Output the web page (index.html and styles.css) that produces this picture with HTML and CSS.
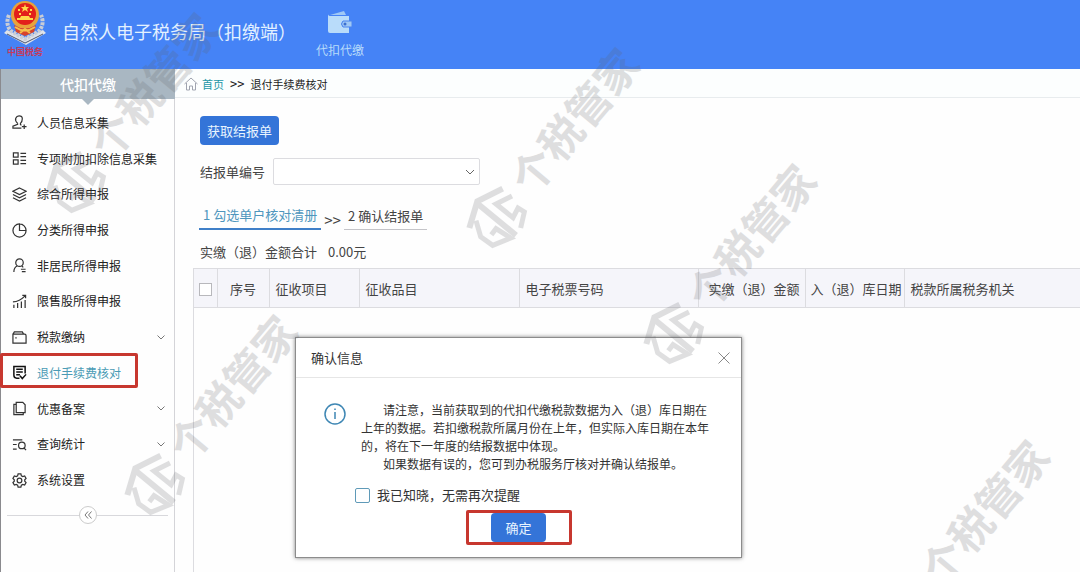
FILE: index.html
```
<!DOCTYPE html>
<html lang="zh-CN">
<head>
    <meta charset="UTF-8">
    <meta name="viewport" content="width=device-width, initial-scale=1.0">
    <title>自然人电子税务局（扣缴端）</title>
    <link rel="stylesheet" href="styles.css">
</head>
<body>

<!-- Header -->
<header class="header">
    <div class="brand">
        <svg class="emblem" viewBox="0 0 42 45">
            <path d="M3 30 L21 38 L39 30 L42 33 L22 45 L0 33 Z" fill="#dfe3ea"/>
            <path d="M5 15 Q1 24 7 31 L21 39 L35 31 Q41 24 37 15" fill="none" stroke="#c9cdd6" stroke-width="4" stroke-dasharray="3 1"/>
            <path d="M3 34 L21 43 L39 34" fill="none" stroke="#4b5570" stroke-width="1"/>
            <circle cx="21" cy="15" r="14" fill="#e8a33b"/>
            <circle cx="21" cy="14" r="11" fill="#e3201b"/>
            <path d="M21 4 l1 3 h3 l-2 2 1 3 -3 -2 -3 2 1 -3 -2 -2 h3z" fill="#ffd94a"/>
            <path d="M14 10h2M26 10h2M15 14h2M25 14h2" stroke="#ffd94a" stroke-width="2"/>
            <path d="M13 20h16v-2h-3l-1-2h-8l-1 2h-3z" fill="#ffd94a"/>
            <path d="M10 25 Q21 32 32 25 L30 32 L21 36 L12 32 Z" fill="#d8422a"/>
            <path d="M11 27 Q21 34 31 27M16 33 L21 29 L26 33" fill="none" stroke="#f3c04d" stroke-width="2"/>
        </svg>
        <span class="emblem-text">中国税务</span>
    </div>
    <h1 class="title">自然人电子税务局（扣缴端）</h1>
    <a class="top-nav" href="#">
        <svg class="wallet" viewBox="0 0 24 24">
            <path d="M2 5 L16 1 L18 5 Z" fill="#9fc8f5"/>
            <path d="M0 4 Q0 6 3 6 H21 V11 H15 Q12 14 15 17 H21 V23 H2 Q0 23 0 21 Z" fill="#b9dcfa"/>
            <path d="M15 11 H24 V17 H15 Q12 14 15 11 Z" fill="#9fc8f5" stroke="#4a84ee" stroke-width="1"/>
            <circle cx="17" cy="14" r="1.5" fill="#3c6fcf"/>
        </svg>
        <span>代扣代缴</span>
    </a>
</header>

<div class="layout">
    <!-- Sidebar -->
    <aside class="sidebar">
        <h2 class="sidebar-title">代扣代缴</h2>
        <nav>
            <ul class="menu">
                <li><a href="#">
                    <svg class="icon" viewBox="0 0 16 16"><path d="M6 9 Q3 6 4 3.500 Q5 1 7.500 1 Q11 1 11 4 Q11 7 9 9 V10 L10 11 M6 9 V10 L1 12 V14 H10 M13 10 V15 M10.500 12.500 H15.500"/></svg>
                    <span>人员信息采集</span></a></li>
                <li><a href="#">
                    <svg class="icon" viewBox="0 0 16 16"><path d="M1.500 2 H6.500 V6.500 H1.500 Z M1.500 9.500 H6.500 V14 H1.500 Z M9 2.500 H15 M9 6 H15 M9 10 H15 M9 13.500 H15"/></svg>
                    <span>专项附加扣除信息采集</span></a></li>
                <li><a href="#">
                    <svg class="icon" viewBox="0 0 16 16"><path d="M8 1 L15 4.500 L8 8 L1 4.500 Z M1 8 L8 11.500 L15 8 M1 11.500 L8 15 L15 11.500"/></svg>
                    <span>综合所得申报</span></a></li>
                <li><a href="#">
                    <svg class="icon" viewBox="0 0 16 16"><path d="M8 1 A7 7 0 1 0 15 8 H8 Z M8 1 A7 7 0 0 1 15 8"/></svg>
                    <span>分类所得申报</span></a></li>
                <li><a href="#">
                    <svg class="icon" viewBox="0 0 16 16"><circle cx="8" cy="5" r="4"/><path d="M5.500 8.500 Q2 10 2 15 M10.500 8.500 L12 10 M9.500 12 H14.500 M10.500 14.500 H14.500"/></svg>
                    <span>非居民所得申报</span></a></li>
                <li><a href="#">
                    <svg class="icon" viewBox="0 0 16 16"><path d="M2 15 V11.500 M6 15 V9.500 M10 15 V8 M14 15 V6.500 M1 8.500 Q8 8 14 2 M11 1.500 H14.500 V4.500"/></svg>
                    <span>限售股所得申报</span></a></li>
                <li><a href="#">
                    <svg class="icon" viewBox="0 0 16 16"><path d="M1 4.500 H13.500 Q15 4.500 15 6 V14 H1 Z M1 4.500 L2.500 2 H11 L12.500 4.500 M3.500 8.500 H5"/></svg>
                    <span>税款缴纳</span>
                    <svg class="arrow" viewBox="0 0 8 5"><path d="M.5 .5 L4 4 L7.500 .5"/></svg></a></li>
                <li class="active"><a href="#">
                    <svg class="icon" viewBox="0 0 16 16"><path d="M14 9 V1.500 H2 V11 Q2 14 5 14 H8 M4.500 4.500 H11.500 M4.500 7.500 H11.500 M4.500 10.500 H8.500 M8.500 11.500 L11 14.500 L15 10"/></svg>
                    <span>退付手续费核对</span></a></li>
                <li><a href="#">
                    <svg class="icon" viewBox="0 0 16 16"><path d="M4.500 1.500 H11.500 L14 4 V12.500 H4.500 Z M4.500 3.500 H2 V14.500 H12 V12.500"/></svg>
                    <span>优惠备案</span>
                    <svg class="arrow" viewBox="0 0 8 5"><path d="M.5 .5 L4 4 L7.500 .5"/></svg></a></li>
                <li><a href="#">
                    <svg class="icon" viewBox="0 0 16 16"><path d="M1 3 H11 M1 8 H5 M1 13 H5 M12.500 11.500 L15 14"/><circle cx="10.500" cy="9" r="3.500"/></svg>
                    <span>查询统计</span>
                    <svg class="arrow" viewBox="0 0 8 5"><path d="M.5 .5 L4 4 L7.500 .5"/></svg></a></li>
                <li><a href="#">
                    <svg class="icon" viewBox="0 0 16 16"><path d="M6.500 1 H9.500 L10 3 L11.500 3.800 L13.500 3.200 L15 5.800 L13.600 7.200 V8.800 L15 10.200 L13.500 12.800 L11.500 12.200 L10 13 L9.500 15 H6.500 L6 13 L4.500 12.200 L2.500 12.800 L1 10.200 L2.400 8.800 V7.200 L1 5.800 L2.500 3.200 L4.500 3.800 L6 3 Z"/><circle cx="8" cy="8" r="2.500"/></svg>
                    <span>系统设置</span></a></li>
            </ul>
        </nav>
        <div class="collapse">
            <button type="button" class="collapse-btn" aria-label="收起菜单">
                <svg viewBox="0 0 8 8"><path d="M4 .5 L1 4 L4 7.500 M7.500 .5 L4.500 4 L7.500 7.500"/></svg>
            </button>
        </div>
    </aside>

    <!-- Content -->
    <main class="main">
        <div class="breadcrumb">
            <svg class="home" viewBox="0 0 14 14"><path d="M.5 7 L7 1 L13.500 7 M2.500 6 V13 H5.500 V9 H8.500 V13 H11.500 V6"/></svg>
            <a href="#">首页</a>
            <span class="sep">&gt;&gt;</span>
            <span>退付手续费核对</span>
        </div>

        <div class="toolbar">
            <button type="button" class="btn">获取结报单</button>
            <div class="field">
                <label for="billNo">结报单编号</label>
                <select id="billNo">
                    <option value=""></option>
                </select>
            </div>
            <div class="steps">
                <a class="step current" href="#">1 勾选单户核对清册</a>
                <span class="sep step-sep">&gt;&gt;</span>
                <a class="step" href="#">2 确认结报单</a>
            </div>
            <div class="total"><span>实缴（退）金额合计</span><span>0.00元</span></div>
        </div>

        <div class="table-wrap">
            <table>
                <thead>
                    <tr>
                        <th class="col-check"><input type="checkbox" aria-label="全选"></th>
                        <th class="col-no">序号</th>
                        <th class="col-item">征收项目</th>
                        <th class="col-sub">征收品目</th>
                        <th class="col-ticket">电子税票号码</th>
                        <th class="col-amount">实缴（退）金额</th>
                        <th class="col-date">入（退）库日期</th>
                        <th>税款所属税务机关</th>
                    </tr>
                </thead>
            </table>
        </div>
    </main>
</div>

<!-- Confirm dialog -->
<div class="dialog" role="dialog" aria-labelledby="dialogTitle">
    <div class="dialog-head">
        <h3 id="dialogTitle">确认信息</h3>
        <button type="button" class="close" aria-label="关闭">
            <svg viewBox="0 0 12 12"><path d="M.5 .5 L11.500 11.500 M11.500 .5 L.5 11.500"/></svg>
        </button>
    </div>
    <div class="dialog-body">
        <svg class="info" viewBox="0 0 22 22"><circle cx="11" cy="11" r="10"/><path d="M11 9 V16 M11 5.500 V7"/></svg>
        <div class="message">
            <p>请注意，当前获取到的代扣代缴税款数据为入（退）库日期在<br>上年的数据。若扣缴税款所属月份在上年，但实际入库日期在本年<br>的，将在下一年度的结报数据中体现。</p>
            <p>如果数据有误的，您可到办税服务厅核对并确认结报单。</p>
        </div>
    </div>
    <label class="remind"><input type="checkbox"> 我已知晓，无需再次提醒</label>
    <div class="dialog-foot">
        <div class="mark">
            <button type="button" class="btn btn-ok">确定</button>
        </div>
    </div>
</div>

<!-- Watermark -->
<div class="watermarks" aria-hidden="true">
    <svg class="wm-source">
        <symbol id="wm" viewBox="0 8 190 212">
            <g transform="translate(0 154) scale(.3333)" fill="none" stroke="#62646a" stroke-width="15">
                <path d="M110 8 L34 46 L10 126 M36 54 L150 148" stroke-width="18"/>
                <path d="M138 30 L90 54 L141 95 L156 66 L175 78 L164 126"/>
                <path d="M30 104 L44 152 L80 178 L134 156 L90 128 L76 146"/>
            </g>
            <text x="38" y="15" transform="translate(30 185) rotate(-50)" font-size="43" font-weight="700" fill="#62646a">个税管家</text>
        </symbol>
    </svg>
    <svg class="wm wm-1"><use href="#wm"/></svg>
    <svg class="wm wm-2"><use href="#wm"/></svg>
    <svg class="wm wm-3"><use href="#wm"/></svg>
    <svg class="wm wm-4"><use href="#wm"/></svg>
    <svg class="wm wm-5"><use href="#wm"/></svg>
</div>

</body>
</html>
```
FILE: styles.css
```
* {
    box-sizing: border-box;
}
body {
    position: relative;
    display: flex;
    flex-direction: column;
    min-height: 100vh;
    margin: 0;
    overflow: hidden;
    font-family: "Noto Sans CJK SC", "Liberation Sans", sans-serif;
    font-size: 13px;
    color: #444;
    background-color: #fefefe;
}
h1, h2, h3, p, ul {
    margin: 0;
    padding: 0;
    font-weight: normal;
}
a {
    color: inherit;
    text-decoration: none;
}
button, select, input {
    margin: 0;
    font-family: inherit;
    font-size: inherit;
}
svg {
    flex: none;
    fill: none;
    stroke-width: 1;
}

/* Header */
.header {
    display: flex;
    align-items: center;
    height: 69px;
    padding-left: 4px;
    background-color: #4583f6;
    color: #e3f1ff;
}
.brand {
    display: flex;
    flex-direction: column;
    align-items: center;
    align-self: flex-start;
    width: 42px;
}
.emblem {
    width: 42px;
    height: 45px;
}
.emblem-text {
    font-size: 9px;
    font-weight: bold;
    line-height: 14px;
    color: #c43b5c;
}
.title {
    margin: 0 20px 8px 16px;
    font-size: 18px;
    line-height: 24px;
}
.top-nav {
    display: flex;
    flex-direction: column;
    align-items: center;
    gap: 7px;
    font-size: 12px;
    line-height: 18px;
    color: #b9dcfa;
}
.wallet {
    width: 24px;
    height: 24px;
}

/* Sidebar */
.layout {
    display: flex;
    flex: 1;
}
.sidebar {
    flex: none;
    width: 175px;
    border-left: 1px solid #8a8a8e;
    border-right: 1px solid #d4d4d8;
}
.sidebar-title {
    position: relative;
    margin-right: -1px;
    font-size: 14px;
    font-weight: 500;
    line-height: 30px;
    text-align: center;
    color: #fff;
    background-color: #a9b7c2;
}
.sidebar-title::after {
    content: "";
    position: absolute;
    top: 100%;
    left: 50%;
    margin-left: -6px;
    border: 6px solid transparent;
    border-top-color: #a9b7c2;
    border-bottom: 0;
}
.menu {
    display: grid;
    min-height: 393px;
    margin-top: 6px;
    list-style: none;
}
.menu li {
    position: relative;
    display: grid;
}
.menu a {
    display: flex;
    align-items: center;
    gap: 10px;
    padding: 0 9px 0 11px;
    font-size: 12px;
    line-height: 18px;
    color: #222;
}
.menu .active span {
    color: #4a9bb5;
}
.menu .active::after {
    content: "";
    position: absolute;
    inset: -2px 36px 3px -1px;
    border: 3px solid #c7372f;
    border-radius: 2px;
    pointer-events: none;
}
.icon {
    width: 15px;
    height: 15px;
    stroke: #333;
    stroke-width: 1.3;
}
.active .icon {
    stroke: #111;
    stroke-width: 1.6;
}
.arrow {
    width: 8px;
    height: 5px;
    margin-left: auto;
    stroke: #777;
}
.collapse {
    display: flex;
    align-items: center;
    justify-content: center;
    margin: 8px 6px 0;
}
.collapse::before, .collapse::after {
    content: "";
    flex: 1;
    border-top: 1px solid #d8d8dc;
}
.collapse-btn {
    display: flex;
    align-items: center;
    justify-content: center;
    width: 18px;
    height: 18px;
    padding: 0;
    border: 1px solid #ccc;
    border-radius: 50%;
    background-color: #fff;
}
.collapse-btn svg {
    width: 8px;
    height: 8px;
    stroke: #777;
}

/* Content */
.main {
    display: flex;
    flex: 1;
    flex-direction: column;
    min-width: 0;
}
.breadcrumb {
    display: flex;
    align-items: center;
    gap: 4px;
    padding: 6px 8px 4px 9px;
    border-bottom: 1px solid #e8ecee;
    font-size: 11px;
    line-height: 18px;
    color: #222;
    background-color: #fcfefe;
}
.breadcrumb a {
    color: #2196a6;
}
.sep {
    font-family: "DejaVu Sans Mono", monospace;
}
.home {
    width: 14px;
    height: 14px;
    stroke: #a0a4b0;
}
.breadcrumb .sep {
    font-size: 12px;
    padding: 0 2px;
}
.toolbar {
    display: flex;
    flex-direction: column;
    align-items: flex-start;
    padding: 18px 25px 6px;
}
.btn {
    height: 29px;
    padding: 0 7px;
    border: 0;
    border-radius: 4px;
    line-height: 20px;
    color: #e8f4ff;
    background-color: #3474d8;
}
.field {
    display: flex;
    align-items: center;
    gap: 8px;
    margin-top: 13px;
}
.field select {
    width: 207px;
    height: 27px;
    padding: 0 8px;
    border: 1px solid #dcdce0;
    border-radius: 2px;
    appearance: none;
    background: #fff url("data:image/svg+xml,%3Csvg xmlns='http://www.w3.org/2000/svg' viewBox='0 0 10 6'%3E%3Cpath d='M1 1L5 5L9 1' fill='none' stroke='%23666'/%3E%3C/svg%3E") no-repeat right 4px center / 10px 6px;
}
.steps {
    display: flex;
    align-items: center;
    gap: 3px;
    margin: 18px 0 0 -1px;
}
.step {
    padding: 2px 4px 3px;
    border-bottom: 1px solid #c4c4c8;
    line-height: 21px;
}
.step.current {
    border-bottom: 2px solid #3f7fc8;
    line-height: 20px;
    color: #4f96bd;
}
.step-sep {
    padding-top: 6px;
    font-size: 14px;
}
.total {
    display: flex;
    gap: 11px;
    margin-top: 12px;
    line-height: 20px;
}
.table-wrap {
    flex: 1;
    margin-left: 18px;
    border-left: 1px solid #dcdce0;
}
table {
    width: 100%;
    border-collapse: collapse;
    table-layout: fixed;
    background-color: #f5f5fa;
}
th {
    height: 39px;
    padding: 0 6px;
    border: solid #dcdce0;
    border-width: 1px 1px 1px 0;
    font-weight: normal;
    text-align: left;
    white-space: nowrap;
}
th:last-child {
    border-right: 0;
}
.col-check {
    width: 23px;
    padding: 0;
    text-align: center;
}
.col-no {
    width: 52px;
    text-align: center;
}
.col-item {
    width: 90px;
}
.col-sub {
    width: 160px;
}
.col-ticket {
    width: 179px;
}
.col-amount {
    width: 107px;
    padding: 0 5px;
    text-align: right;
}
.col-date {
    width: 99px;
    padding: 0 5px;
}
input[type="checkbox"] {
    width: 13px;
    height: 13px;
    border: 1px solid #b8b8bc;
    appearance: none;
    background-color: #fff;
    vertical-align: middle;
}

/* Dialog */
.dialog {
    position: absolute;
    top: 337px;
    left: 295px;
    width: 447px;
    border: 1px solid #8c8c8c;
    background-color: #fff;
    box-shadow: 0 0 4px rgba(0, 0, 0, 0.5);
    color: #333;
}
.dialog-head {
    display: flex;
    align-items: center;
    justify-content: space-between;
    height: 40px;
    padding: 0 11px 0 15px;
    border-bottom: 1px solid #e6e6e6;
}
.dialog-head h3 {
    font-size: 13px;
}
.close {
    display: flex;
    padding: 0;
    border: 0;
    background: none;
}
.close svg {
    width: 12px;
    height: 12px;
    stroke: #888;
}
.dialog-body {
    display: flex;
    align-items: flex-start;
    gap: 15px;
    padding: 23px 12px 0 28px;
    font-size: 12px;
    line-height: 18px;
}
.info {
    width: 22px;
    height: 22px;
    margin-top: 2px;
    stroke: #3f87b4;
    stroke-width: 1.5;
}
.message p {
    text-indent: 22px;
    white-space: nowrap;
}
.remind {
    display: flex;
    align-items: center;
    gap: 7px;
    margin: 13px 0 0 59px;
    line-height: 18px;
}
.remind input {
    width: 15px;
    height: 15px;
    border-color: #5f9ab8;
    border-radius: 2px;
}
.dialog-foot {
    display: flex;
    justify-content: center;
    padding: 6px 0 12px;
}
.mark {
    display: flex;
    justify-content: center;
    width: 106px;
    border: 3px solid #c7372f;
    border-radius: 2px;
}
.btn-ok {
    padding: 0 14px;
}

/* Watermark */
.watermarks {
    position: absolute;
    inset: 0;
    overflow: hidden;
    opacity: 0.2;
    pointer-events: none;
}
.wm-source {
    position: absolute;
    width: 0;
    height: 0;
}
.wm {
    position: absolute;
    width: 190px;
    height: 212px;
}
.wm-1 {
    top: 5px;
    left: 45px;
}
.wm-2 {
    top: 40px;
    left: 466px;
}
.wm-3 {
    top: 156px;
    left: 643px;
}
.wm-4 {
    top: 307px;
    left: 124px;
}
.wm-5 {
    top: 432px;
    left: 876px;
}
```
